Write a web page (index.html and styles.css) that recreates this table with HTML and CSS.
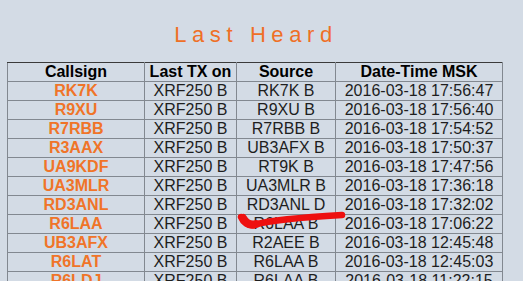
FILE: index.html
```html
<!DOCTYPE html>
<html>
<head>
<meta charset="utf-8">
<link rel="stylesheet" href="styles.css">
</head>
<body>
<div class="page">
  <div class="title">Last Heard</div>
  <table class="lh">
    <colgroup>
      <col class="c1"><col class="c2"><col class="c3"><col class="c4">
    </colgroup>
    <thead>
      <tr><th>Callsign</th><th>Last TX on</th><th>Source</th><th>Date-Time MSK</th></tr>
    </thead>
    <tbody>
      <tr><td class="call">RK7K</td><td>XRF250 B</td><td>RK7K B</td><td>2016-03-18 17:56:47</td></tr>
      <tr><td class="call">R9XU</td><td>XRF250 B</td><td>R9XU B</td><td>2016-03-18 17:56:40</td></tr>
      <tr><td class="call">R7RBB</td><td>XRF250 B</td><td>R7RBB B</td><td>2016-03-18 17:54:52</td></tr>
      <tr><td class="call">R3AAX</td><td>XRF250 B</td><td>UB3AFX B</td><td>2016-03-18 17:50:37</td></tr>
      <tr><td class="call">UA9KDF</td><td>XRF250 B</td><td>RT9K B</td><td>2016-03-18 17:47:56</td></tr>
      <tr><td class="call">UA3MLR</td><td>XRF250 B</td><td>UA3MLR B</td><td>2016-03-18 17:36:18</td></tr>
      <tr><td class="call">RD3ANL</td><td>XRF250 B</td><td>RD3ANL D</td><td>2016-03-18 17:32:02</td></tr>
      <tr><td class="call">R6LAA</td><td>XRF250 B</td><td>R6LAA B</td><td>2016-03-18 17:06:22</td></tr>
      <tr><td class="call">UB3AFX</td><td>XRF250 B</td><td>R2AEE B</td><td>2016-03-18 12:45:48</td></tr>
      <tr><td class="call">R6LAT</td><td>XRF250 B</td><td>R6LAA B</td><td>2016-03-18 12:45:03</td></tr>
      <tr><td class="call">R6LDJ</td><td>XRF250 B</td><td>R6LAA B</td><td>2016-03-18 11:22:15</td></tr>
    </tbody>
  </table>
  <svg class="scribble" width="523" height="281" viewBox="0 0 523 281">
    <path d="M241 217 C 243 222, 248 227, 255 224.5 C 268 221, 290 218, 342 215" fill="none" stroke="#ee1010" stroke-width="6.5" stroke-linecap="round" stroke-linejoin="round"/>
    <path d="M243 218 C 246 223, 250 226, 256 224" fill="none" stroke="#ee1010" stroke-width="8" stroke-linecap="round"/>
  </svg>
</div>
</body>
</html>
```

FILE: styles.css
```css
html, body {
  margin: 0;
  padding: 0;
  background: #d3dbe5;
  overflow: hidden;
}

.page {
  position: relative;
  width: 523px;
  height: 281px;
  padding-top: 22px;
  box-sizing: border-box;
  font-family: "Liberation Sans", Arial, sans-serif;
}

.title {
  width: 512px;
  text-align: center;
  font-size: 22px;
  line-height: 25px;
  letter-spacing: 5.6px;
  color: #ef6f26;
  margin-bottom: 15px;
}

.lh {
  margin-left: 7px;
  width: 495px;
  table-layout: fixed;
  border-collapse: collapse;
  border: 1px solid #3a3a3a;
  font-size: 16px;
  line-height: 18px;
}

.c1 { width: 137px; }
.c2 { width: 92px; }
.c3 { width: 99px; }
.c4 { width: 167px; }

.lh th, .lh td {
  border: 1px solid #828890;
  padding: 0;
  text-align: center;
  white-space: nowrap;
  overflow: hidden;
}

.lh thead th {
  border-top: 1px solid #3a3a3a;
  color: #000;
  font-weight: bold;
}

.lh td {
  color: #1e1e1e;
}

.lh td.call {
  color: #f07428;
  font-weight: bold;
}

.scribble {
  position: absolute;
  left: 0;
  top: 0;
  pointer-events: none;
}
```
